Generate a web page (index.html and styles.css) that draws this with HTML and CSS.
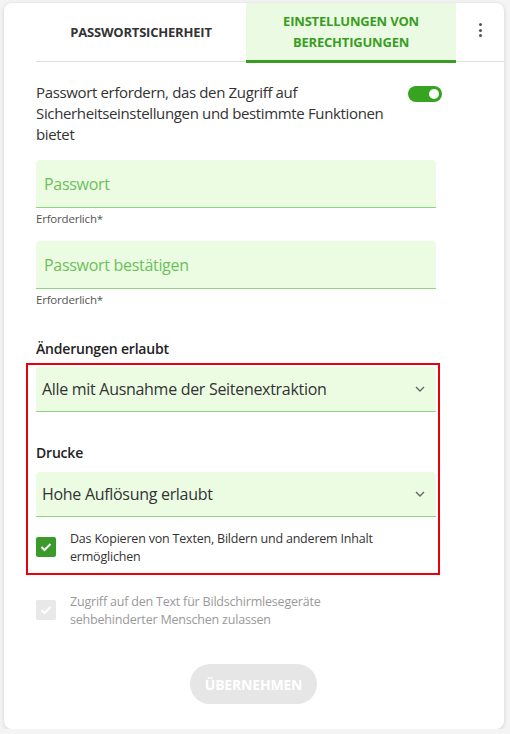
FILE: index.html
```html
<!DOCTYPE html>
<html lang="de">
<head>
  <meta charset="UTF-8">
  <meta name="viewport" content="width=device-width, initial-scale=1.0">
  <title>Berechtigungen</title>
  <link rel="stylesheet" href="styles.css">
</head>
<body>
  <div class="card">
    <div class="tabs">
      <div class="tab">PASSWORTSICHERHEIT</div>
      <div class="tab active">EINSTELLUNGEN VON<br>BERECHTIGUNGEN</div>
      <div class="menu">
        <span></span><span></span><span></span>
      </div>
    </div>

    <div class="content">
      <div class="require-row">
        <p class="require-text">Passwort erfordern, das den Zugriff auf Sicherheitseinstellungen und bestimmte Funktionen bietet</p>
        <div class="toggle"><span class="knob"></span></div>
      </div>

      <div class="field">
        <div class="input">Passwort</div>
        <div class="hint">Erforderlich*</div>
      </div>

      <div class="field">
        <div class="input">Passwort bestätigen</div>
        <div class="hint">Erforderlich*</div>
      </div>

      <div class="label first">Änderungen erlaubt</div>

      <div class="highlight">
        <div class="select">
          <span>Alle mit Ausnahme der Seitenextraktion</span>
          <svg class="chevron" width="10" height="6" viewBox="0 0 10 6"><path d="M1 1l4 4 4-4" fill="none" stroke="#666" stroke-width="1.4"/></svg>
        </div>

        <div class="label">Drucke</div>

        <div class="select">
          <span>Hohe Auflösung erlaubt</span>
          <svg class="chevron" width="10" height="6" viewBox="0 0 10 6"><path d="M1 1l4 4 4-4" fill="none" stroke="#666" stroke-width="1.4"/></svg>
        </div>

        <div class="check-row">
          <div class="checkbox">
            <svg width="12" height="10" viewBox="0 0 12 10"><path d="M1.5 5l3 3 6-6" fill="none" stroke="#fff" stroke-width="2"/></svg>
          </div>
          <div class="check-text">Das Kopieren von Texten, Bildern und anderem Inhalt ermöglichen</div>
        </div>
      </div>

      <div class="check-row disabled">
        <div class="checkbox">
          <svg width="12" height="10" viewBox="0 0 12 10"><path d="M1.5 5l3 3 6-6" fill="none" stroke="#fff" stroke-width="2"/></svg>
        </div>
        <div class="check-text">Zugriff auf den Text für Bildschirmlesegeräte sehbehinderter Menschen zulassen</div>
      </div>

      <div class="actions">
        <button type="button" disabled>ÜBERNEHMEN</button>
      </div>
    </div>
  </div>
</body>
</html>
```

FILE: styles.css
```css
body {
  font-family: "Open Sans", "Noto Sans", sans-serif;
  background-color: #f4f4f4;
  color: #333333;
  margin: 0;
  padding: 3px 6px 0 4px;
}

.card {
  background-color: #ffffff;
  border-radius: 8px;
  box-shadow: 0 1px 4px rgba(0, 0, 0, 0.15);
  height: 726px;
  overflow: hidden;
}

.tabs {
  display: flex;
  margin-left: 32px;
  height: 58px;
  border-bottom: 1px solid #e0e0e0;
}

.tab {
  width: 210px;
  display: flex;
  align-items: center;
  justify-content: center;
  text-align: center;
  font-size: 13px;
  font-weight: 700;
  line-height: 21px;
  color: #333333;
  letter-spacing: -0.2px;
}

.tab.active {
  background-color: #ebfbe3;
  color: #3a9d23;
  border-bottom: 3px solid #3a9d23;
  height: 56px;
  margin-bottom: -1px;
  padding-top: 1px;
}

.menu {
  flex: 1;
  display: flex;
  flex-direction: column;
  align-items: center;
  padding-top: 20px;
  gap: 2.5px;
}

.menu span {
  width: 3px;
  height: 3px;
  border-radius: 50%;
  background-color: #555555;
}

.content {
  padding: 20px 68px 0 32px;
}

.require-row {
  display: flex;
  justify-content: space-between;
  align-items: flex-start;
}

.require-text {
  margin: 0;
  width: 350px;
  font-size: 15px;
  line-height: 21px;
  color: #333333;
  letter-spacing: -0.35px;
}

.toggle {
  width: 34px;
  height: 16px;
  border-radius: 8px;
  background-color: #36a41e;
  margin: 4px -6px 0 0;
  display: flex;
  align-items: center;
  justify-content: flex-end;
  padding-right: 3px;
  box-sizing: border-box;
}

.knob {
  width: 10px;
  height: 10px;
  border-radius: 50%;
  background-color: #ffffff;
}

.field {
  margin-top: 15px;
}

.input {
  height: 47px;
  background-color: #ebfce3;
  border-bottom: 1px solid #8fd480;
  border-radius: 4px 4px 0 0;
  padding-left: 8px;
  display: flex;
  align-items: center;
  font-size: 16px;
  color: #6cc05a;
  letter-spacing: -0.3px;
}

.hint {
  font-size: 11.5px;
  line-height: 14px;
  color: #555555;
  margin-top: 4px;
  letter-spacing: -0.2px;
}

.label {
  font-size: 14px;
  font-weight: 600;
  line-height: 20px;
  color: #222222;
  margin: 31px 0 9px;
  letter-spacing: -0.2px;
}

.label.first {
  margin: 32px 0 4px;
}

.highlight {
  border: 2px solid #e8000b;
  margin-left: -10px;
  padding: 2px 2px 7px 8px;
  width: 400px;
}

.select {
  height: 44px;
  background-color: #ebfce3;
  border-bottom: 1px solid #8fd480;
  border-radius: 4px 4px 0 0;
  padding: 0 11px 0 6px;
  display: flex;
  align-items: center;
  justify-content: space-between;
  font-size: 16px;
  color: #333333;
  letter-spacing: -0.3px;
}

.check-row {
  display: flex;
  align-items: flex-start;
  gap: 14px;
  margin-top: 13px;
}

.checkbox {
  width: 20px;
  height: 20px;
  flex-shrink: 0;
  border-radius: 2px;
  background-color: #3a9a2a;
  display: flex;
  align-items: center;
  justify-content: center;
  margin-top: 7px;
}

.check-text {
  font-size: 12.5px;
  line-height: 18px;
  color: #333333;
  width: 330px;
  letter-spacing: -0.2px;
}

.check-row.disabled {
  margin-top: 18px;
}

.check-row.disabled .checkbox {
  background-color: #e8e8e8;
}

.check-row.disabled .check-text {
  color: #999999;
  width: 300px;
}

.actions {
  display: flex;
  justify-content: center;
  margin-top: 35px;
  padding-left: 35px;
}

button {
  width: 127px;
  height: 40px;
  border: none;
  border-radius: 20px;
  background-color: #e6e6e6;
  color: #ffffff;
  font-family: inherit;
  font-size: 14px;
  font-weight: 700;
  letter-spacing: -0.2px;
}
```
